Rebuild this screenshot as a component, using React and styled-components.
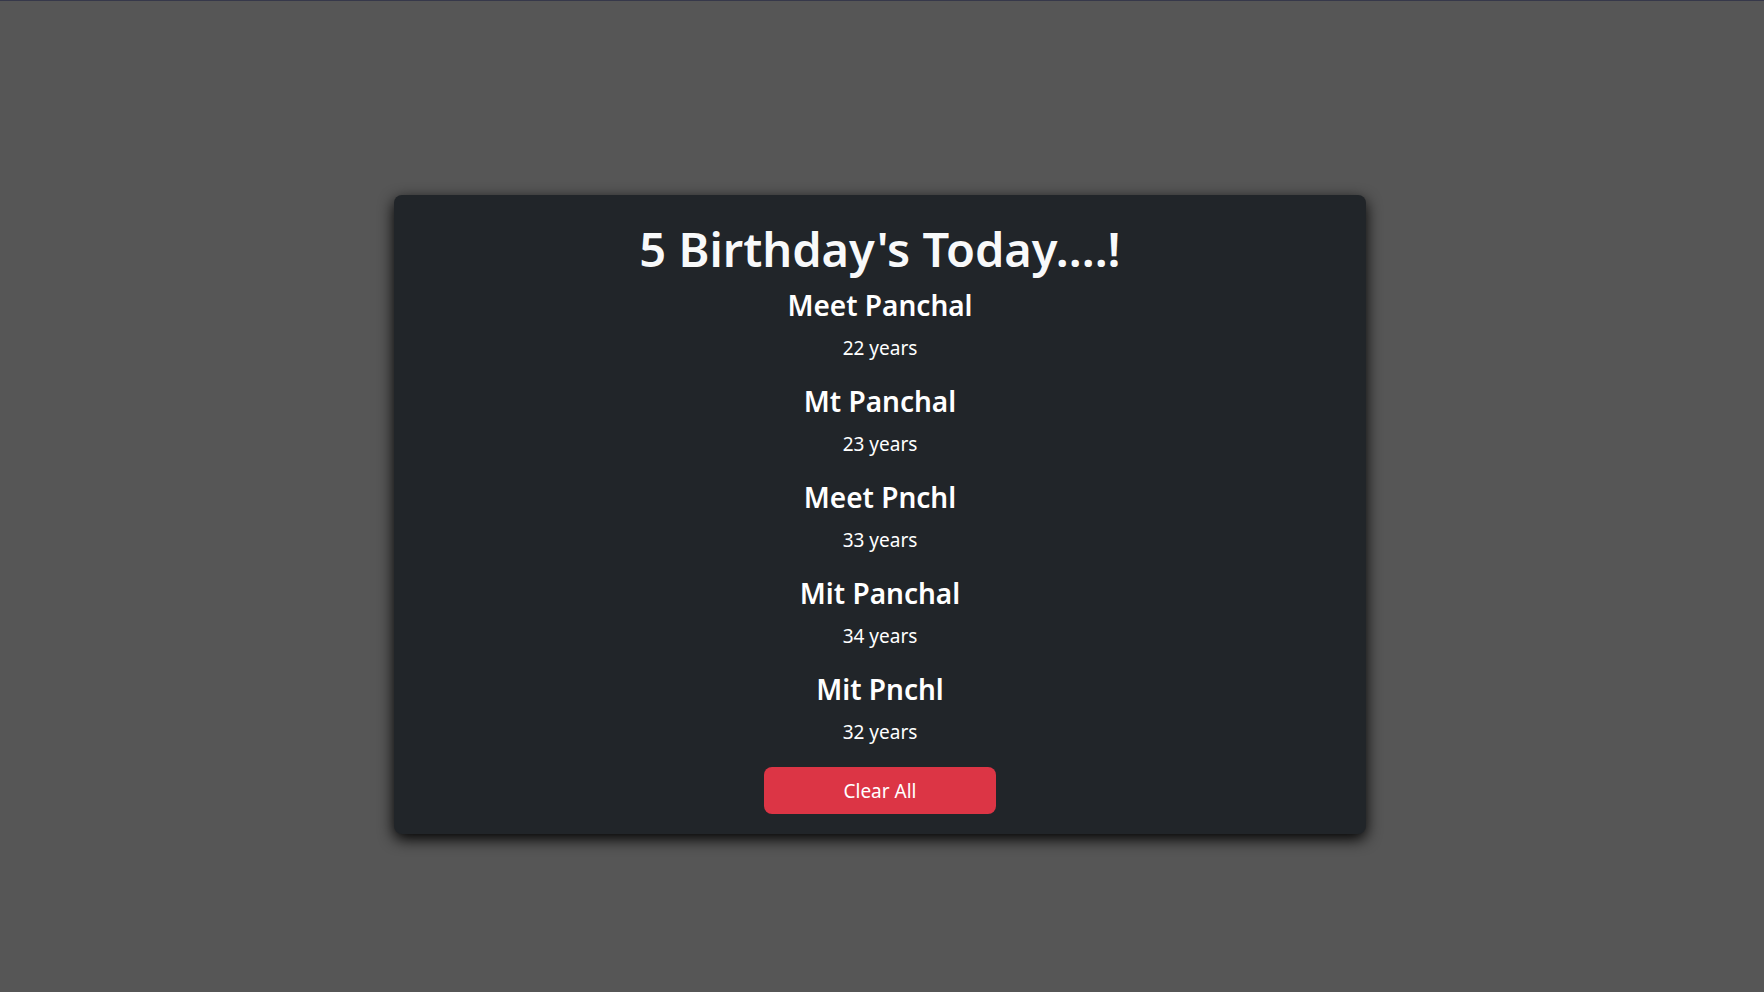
import React, { useState } from "react";
import styled, { createGlobalStyle } from "styled-components";

const GlobalStyle = createGlobalStyle`
  *, *::before, *::after { box-sizing: border-box; }
  body {
    margin: 0;
    background: #565656;
    color: #ffffff;
    font-family: "Segoe UI", "Noto Sans", sans-serif;
  }
`;

const Page = styled.main`
  min-height: 100vh;
  display: flex;
  flex-direction: column;
  align-items: center;
  padding: 194px 4px 24px 0;
  border-top: 1px solid #36384a;
`;

const Card = styled.section`
  width: 55.2%;
  min-width: 320px;
  display: flex;
  flex-direction: column;
  align-items: center;
  padding: 24px 20px 20px;
  border-radius: 8px;
  background: #212529;
  box-shadow: 0 5px 15px #000000;
  text-align: center;
`;

const Title = styled.h1`
  margin: 0 0 8px;
  color: #f8f9fa;
  font-size: 47px;
  font-weight: 600;
  line-height: 60px;
`;

const People = styled.ul`
  margin: 0;
  padding: 0;
  list-style: none;
`;

const Person = styled.li`
  margin-bottom: 20px;
`;

const Name = styled.h2`
  margin: 0 0 10px;
  font-size: 28px;
  font-weight: 600;
  line-height: 36px;
`;

const Age = styled.p`
  margin: 0;
  font-size: 19px;
  line-height: 30px;
`;

const ClearButton = styled.button`
  width: 232px;
  height: 47px;
  padding: 0;
  border: 0;
  border-radius: 8px;
  background: #dc3545;
  color: #ffffff;
  font-family: inherit;
  font-size: 19px;
  line-height: 30px;
  cursor: pointer;
`;

const birthdays = [
  { id: 1, name: "Meet Panchal", age: 22 },
  { id: 2, name: "Mt Panchal", age: 23 },
  { id: 3, name: "Meet Pnchl", age: 33 },
  { id: 4, name: "Mit Panchal", age: 34 },
  { id: 5, name: "Mit Pnchl", age: 32 },
];

export default function App() {
  const [people, setPeople] = useState(birthdays);
  return (
    <>
      <GlobalStyle />
      <Page>
        <Card>
          <Title>{people.length} Birthday's Today....!</Title>
          <People>
            {people.map(({ id, name, age }) => (
              <Person key={id}>
                <Name>{name}</Name>
                <Age>{age} years</Age>
              </Person>
            ))}
          </People>
          <ClearButton type="button" onClick={() => setPeople([])}>
            Clear All
          </ClearButton>
        </Card>
      </Page>
    </>
  );
}
